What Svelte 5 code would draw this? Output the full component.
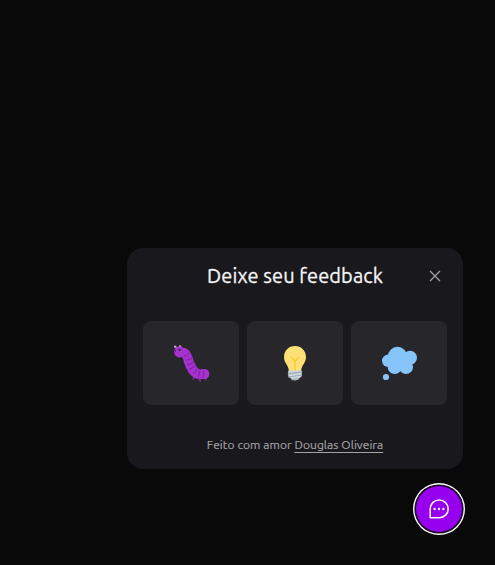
<script>
  const author = 'Douglas Oliveira';
</script>

<main>
  <section class="panel">
    <header>
      <h1>Deixe seu feedback</h1>
      <button class="close" aria-label="Fechar">
        <svg width="16" height="16" viewBox="0 0 16 16"><path d="M3 3l10 10M13 3L3 13" /></svg>
      </button>
    </header>
    <div class="options">
      <button class="option" aria-label="Problema">
        <svg width="40" height="40" viewBox="0 0 40 40">
          <path d="M6 5L4.3 3.6M9.3 6V3.8" stroke="#9266cc" stroke-width="1.2" />
          <circle cx="4.2" cy="3.7" r="1.3" fill="#b69bd0" /><circle cx="9" cy="3.6" r="1.3" fill="#b69bd0" />
          <path d="M14 18l-.5 2M16 23l-.7 2M18.5 28l-.5 2M23 33l-.5 3M28.5 35l.6 3M34 34l.8 2.5" stroke="#7b2199" stroke-width="1.8" stroke-linecap="round" />
          <path d="M9 9.4C17 8 16.5 17 19 21.5c2.5 5.5 4.5 9 9 9.7h5.5" fill="none" stroke="#a633d0" stroke-width="9.6" stroke-linecap="round" stroke-linejoin="round" />
          <circle cx="8.5" cy="9" r="5.4" fill="#a633d0" />
          <circle cx="33.2" cy="31" r="5" fill="#a633d0" />
          <path d="M13.5 13q3-.5 4.5-3M15 17.3q3.5 0 6-2.5M16.5 21.6q3.5-.2 6-2.7M19 26q3-.7 5-3.4M22.5 30.5q2.8-1.8 3.5-4.2M27.3 34.3q1.5-3.3.6-6M32 34.3q1.5-3 .3-6" fill="none" stroke="#8526ab" stroke-width="1.4" stroke-linecap="round" />
          <circle cx="8.7" cy="6.9" r="1.1" fill="#30203d" /><circle cx="4.4" cy="7.8" r=".8" fill="#30203d" />
        </svg>
      </button>
      <button class="option" aria-label="Ideia">
        <svg width="40" height="40" viewBox="0 0 40 40">
          <path d="M20 3C13.7 3 9 7.8 9 14c0 6 4.5 8 5 14h12c.5-6 5-8 5-14C31 7.8 26.3 3 20 3z" fill="#ffe077" />
          <path d="M16.3 14.5l3.7 3.8 3.7-3.8M20 18v10" fill="none" stroke="#ffcc33" stroke-width="1.6" stroke-linecap="round" />
          <path d="M13.2 27.5h13.6v5c0 1.5-2 2.2-3 3.2-1.6 2.3-6 2.3-7.6 0-1-1-3-1.7-3-3.2z" fill="#ccd6dd" />
          <path d="M13.3 30.8l13.4-1.9M13.5 34l13-2M17 36.7l6-.8" stroke="#99aab5" stroke-width="1.2" stroke-linecap="round" />
        </svg>
      </button>
      <button class="option" aria-label="Outro">
        <svg width="40" height="40" viewBox="0 0 40 40" fill="#85c5fb">
          <circle cx="18.5" cy="13.5" r="9.7" /><circle cx="31" cy="14.7" r="7" />
          <circle cx="9.2" cy="17.8" r="6.2" /><circle cx="15.7" cy="24" r="7" />
          <circle cx="27" cy="24" r="7" /><circle cx="7" cy="34" r="3.1" />
          <circle cx="22" cy="19" r="7" />
        </svg>
      </button>
    </div>
    <footer>Feito com amor <a href="#autor">{author}</a></footer>
  </section>
  <button class="launcher" aria-label="Abrir feedback">
    <svg width="24" height="24" viewBox="0 0 24 24">
      <path d="M3.2 20.8V12a9 8.9 0 1 1 9 8.8z" fill="none" stroke="#f4f4f5" stroke-width="1.6" stroke-linejoin="round" />
      <g fill="#f4f4f5"><circle cx="7.6" cy="12" r="1.2" /><circle cx="12" cy="12" r="1.2" /><circle cx="16.4" cy="12" r="1.2" /></g>
    </svg>
  </button>
</main>

<style>
  :global(body) { background: #09090a; }
  main {
    box-sizing: border-box; height: 565px; padding: 0 32px 32px 0;
    display: flex; flex-direction: column; align-items: flex-end; justify-content: flex-end;
    background: #090909; font-family: Ubuntu, "Noto Sans", sans-serif;
  }
  button { border: 0; padding: 0; cursor: pointer; }
  svg { display: block; }
  .panel {
    box-sizing: border-box; width: 336px; height: 221px; padding: 16px;
    margin-bottom: 16px; border-radius: 16px; background: #19181c;
    display: flex; flex-direction: column; align-items: center;
  }
  header { width: 100%; height: 24px; display: grid; grid-template-columns: 30px 1fr 30px; align-items: center; }
  h1 { grid-column: 2; margin: 0; text-align: center; white-space: nowrap; font-size: 20px; line-height: 24px; font-weight: 400; color: #f4f4f5; letter-spacing: 0.1px; -webkit-text-stroke: 0.3px #f4f4f5; }
  .close { background: none; justify-self: center; margin-right: -6px; }
  .close path { stroke: #a1a1aa; stroke-width: 1.25; }
  .options { display: flex; gap: 8px; margin-top: 33px; width: 100%; }
  .option { flex: 1; height: 84px; border-radius: 8px; background: #27272b; display: flex; align-items: center; justify-content: center; }
  footer { margin-top: 32px; font-size: 12px; line-height: 16px; color: #a4a4a8; white-space: nowrap; letter-spacing: 0.05px; -webkit-text-stroke: 0.15px #a4a4a8; }
  a { color: inherit; text-decoration: underline; text-underline-offset: 3px; }
  .launcher {
    width: 48px; height: 48px; border-radius: 50%; background: #9600ee;
    display: flex; align-items: center; justify-content: center;
    box-shadow: inset 0 0 0 1px #0c0510, 0 0 0 0.6px #09090a, 0 0 0 2px #fff;
  }
</style>
